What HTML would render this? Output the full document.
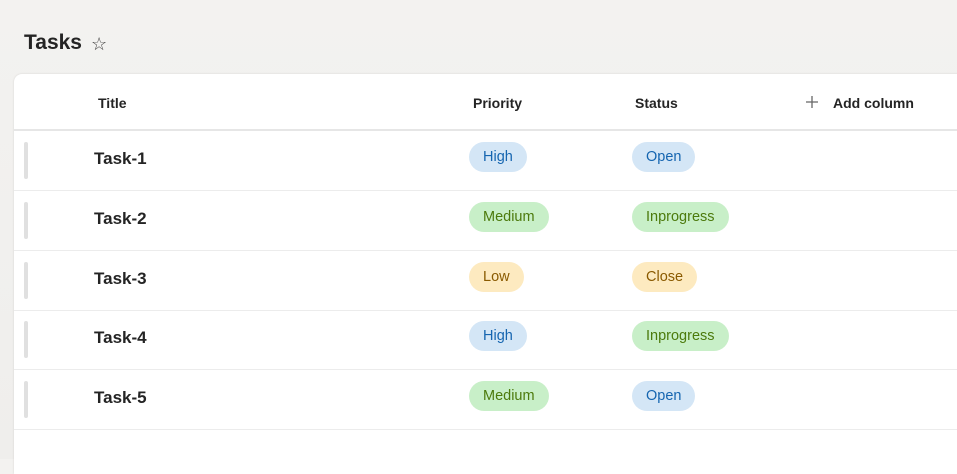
<!DOCTYPE html>
<html><head><style>
*{margin:0;padding:0;box-sizing:border-box}
body{width:957px;height:459px;overflow:hidden;background:linear-gradient(#f3f2f0,#efeeec);font-family:"Liberation Sans",sans-serif;color:#242424;position:relative}
.t{position:absolute;left:24px;top:31px;font-size:21px;font-weight:600}
.star{position:absolute;left:91px;top:34px;font-size:18px;color:#444}
.card{position:absolute;left:14px;top:74px;width:960px;height:400px;background:#fff;border-radius:8px 0 0 0;box-shadow:0 0 2px rgba(0,0,0,.12)}
.h{position:absolute;top:21px;font-size:14px;font-weight:600}
.hl{position:absolute;left:0;right:0;top:55px;height:2px;background:#e6e6e6}
.row{position:absolute;left:0;right:0;height:60px;border-bottom:1px solid #ececec}
.hd{position:absolute;left:10px;top:11px;width:4px;height:37px;border-radius:2px;background:#e0e0e0}
.nm{position:absolute;left:80px;top:18px;font-size:17px;font-weight:600}
.p{position:absolute;top:11px;height:30px;line-height:31px;border-radius:15px;padding:0 14px;font-size:14.5px}
.b{background:#d4e6f6;color:#1565b0}.g{background:#c8efc8;color:#4c7a0c}.y{background:#fdeac0;color:#8a5a00}
</style></head><body>
<div class="t">Tasks</div><div class="star">☆</div>
<div class="card">
<div class="h" style="left:84px">Title</div>
<div class="h" style="left:459px">Priority</div>
<div class="h" style="left:621px">Status</div>
<svg style="position:absolute;left:791px;top:21px" width="14" height="14" viewBox="0 0 14 14"><path d="M7 1V13M1 7H13" stroke="#666" stroke-width="1.3"/></svg>
<div class="h" style="left:819px">Add column</div>
<div class="hl"></div>
<div class="row" style="top:57px"><div class="hd"></div><div class="nm">Task-1</div><div class="p b" style="left:455px">High</div><div class="p b" style="left:618px">Open</div></div>
<div class="row" style="top:117px"><div class="hd"></div><div class="nm">Task-2</div><div class="p g" style="left:455px">Medium</div><div class="p g" style="left:618px">Inprogress</div></div>
<div class="row" style="top:177px"><div class="hd"></div><div class="nm">Task-3</div><div class="p y" style="left:455px">Low</div><div class="p y" style="left:618px">Close</div></div>
<div class="row" style="top:236px"><div class="hd"></div><div class="nm">Task-4</div><div class="p b" style="left:455px">High</div><div class="p g" style="left:618px">Inprogress</div></div>
<div class="row" style="top:296px"><div class="hd"></div><div class="nm">Task-5</div><div class="p g" style="left:455px">Medium</div><div class="p b" style="left:618px">Open</div></div>
</div>
</body></html>
